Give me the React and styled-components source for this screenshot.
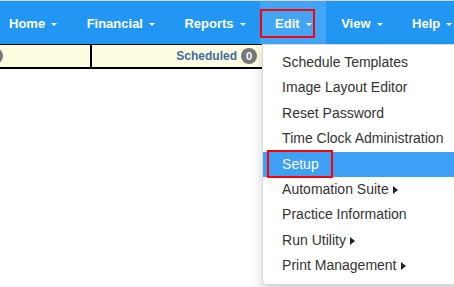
import React from "react";
import styled, { createGlobalStyle } from "styled-components";

const Global = createGlobalStyle`
  html, body { margin: 0; padding: 0; background: #fff; }
  body { font-family: "Liberation Sans", Arial, sans-serif; overflow: hidden; }
  * { box-sizing: border-box; }
`;

const Page = styled.div`
  width: 454px;
  height: 287px;
  position: relative;
  overflow: hidden;
  border-top: 1px solid #d6d6d6;
`;

const NavBar = styled.ul`
  display: flex;
  margin: 0;
  padding: 0;
  list-style: none;
  height: 43px;
  background: #2196f3;
`;

const NavItem = styled.li`
  position: relative;
  display: flex;
  align-items: flex-start;
  height: 43px;
  padding: 15px 14.5px 0 15px;
  background: ${(p) => (p.$active ? "#42a5f5" : "transparent")};
  color: #fff;
  font-weight: bold;
  font-size: 13px;
  line-height: 16px;
  white-space: nowrap;
  &:first-child { padding-left: 9px; }
`;

const Caret = styled.span`
  display: inline-block;
  width: 0;
  height: 0;
  margin: 7px 0 0 6px;
  border-top: 3px solid #fff;
  border-left: 3px solid transparent;
  border-right: 3px solid transparent;
`;

const Highlight = styled.span`
  position: absolute;
  left: ${(p) => p.$left || 0}px;
  top: ${(p) => p.$top}px;
  width: ${(p) => p.$w}px;
  height: ${(p) => p.$h}px;
  border: 2.5px solid #ff0000;
  pointer-events: none;
`;

const Strip = styled.div`
  display: flex;
  height: 25px;
  background: #fffde1;
  border-top: 1.5px solid #000;
  border-bottom: 2px solid #000;
`;

const Cell = styled.div`
  display: flex;
  align-items: center;
  justify-content: ${(p) => (p.$end ? "flex-end" : "flex-start")};
  width: ${(p) => p.$w}px;
  padding-right: ${(p) => (p.$end ? 5 : 0)}px;
  border-right: ${(p) => (p.$divider ? "2px solid #000" : "none")};
`;

const Badge = styled.span`
  display: inline-flex;
  align-items: center;
  justify-content: center;
  width: 16px;
  height: 16px;
  border-radius: 50%;
  background: #777;
  color: #fff;
  font-size: 11px;
  font-weight: bold;
  margin-left: ${(p) => p.$ml || 0}px;
`;

const Label = styled.span`
  color: #3b6e9f;
  font-weight: bold;
  font-size: 12px;
  margin-right: 4px;
`;

const Menu = styled.ul`
  position: absolute;
  top: 43px;
  left: 2px;
  width: 200px;
  margin: 0;
  padding: 5px 0;
  list-style: none;
  background: #fff;
  border: 1px solid rgba(0, 0, 0, 0.15);
  border-radius: 0 0 4px 4px;
  box-shadow: 0 6px 12px rgba(0, 0, 0, 0.175);
  z-index: 5;
`;

const MenuItem = styled.li`
  position: relative;
  display: flex;
  align-items: center;
  padding: 3px 19px;
  line-height: 19.4px;
  font-size: 14px;
  font-weight: normal;
  color: ${(p) => (p.$active ? "#fff" : "#333")};
  background: ${(p) => (p.$active ? "#3d9ff5" : "transparent")};
`;

const SubArrow = styled.span`
  display: inline-block;
  width: 0;
  height: 0;
  margin-left: 4px;
  border-left: 5px solid #222;
  border-top: 4px solid transparent;
  border-bottom: 4px solid transparent;
`;

const items = [
  { label: "Schedule Templates" },
  { label: "Image Layout Editor" },
  { label: "Reset Password" },
  { label: "Time Clock Administration" },
  { label: "Setup", active: true },
  { label: "Automation Suite", sub: true },
  { label: "Practice Information" },
  { label: "Run Utility", sub: true },
  { label: "Print Management", sub: true },
];

const navs = ["Home", "Financial", "Reports", "Edit", "View", "Help"];

export default function App() {
  return (
    <>
      <Global />
      <Page>
        <NavBar>
          {navs.map((n) => (
            <NavItem key={n} $active={n === "Edit"}>
              {n}
              <Caret />
              {n === "Edit" && (
                <>
                  <Highlight $top={8} $w={55} $h={29} />
                  <Menu>
                    {items.map((it) => (
                      <MenuItem key={it.label} $active={it.active}>
                        {it.label}
                        {it.sub && <SubArrow />}
                        {it.active && <Highlight $left={4} $top={-1.5} $w={66} $h={28} />}
                      </MenuItem>
                    ))}
                  </Menu>
                </>
              )}
            </NavItem>
          ))}
        </NavBar>
        <Strip>
          <Cell $w={92} $divider>
            <Badge $ml={-13}>0</Badge>
          </Cell>
          <Cell $w={170} $end>
            <Label>Scheduled</Label>
            <Badge>0</Badge>
          </Cell>
        </Strip>
      </Page>
    </>
  );
}
